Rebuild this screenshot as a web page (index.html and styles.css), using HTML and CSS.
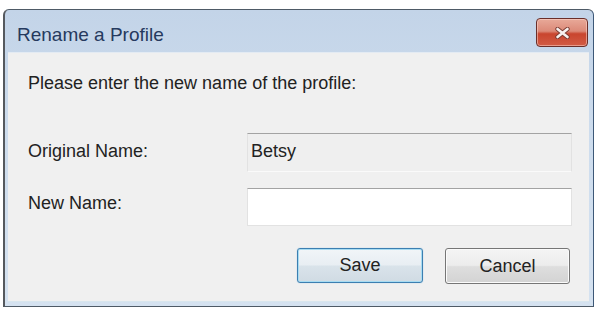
FILE: index.html
```html
<!DOCTYPE html>
<html>
<head>
<meta charset="utf-8">
<link rel="stylesheet" href="styles.css">
</head>
<body>
<div class="window">
  <div class="titlebar">
    <span class="title">Rename a Profile</span>
    <button class="close" aria-label="Close">
      <svg width="17" height="12" viewBox="0 0 17 12">
        <path d="M3.5 2 L13.5 10 M13.5 2 L3.5 10" stroke="#7a3a30" stroke-width="4.4" stroke-linecap="round"/>
        <path d="M3.5 2 L13.5 10 M13.5 2 L3.5 10" stroke="#f7f1ef" stroke-width="2.6" stroke-linecap="round"/>
      </svg>
    </button>
  </div>
  <div class="content">
    <p class="prompt">Please enter the new name of the profile:</p>
    <div class="form">
      <label class="label">Original Name:</label>
      <div class="field readonly">Betsy</div>
      <label class="label label-new">New Name:</label>
      <div class="field editable"></div>
    </div>
    <div class="buttons">
      <button class="btn default">Save</button>
      <button class="btn">Cancel</button>
    </div>
  </div>
</div>
</body>
</html>
```

FILE: styles.css
```css
html, body {
  margin: 0;
  padding: 0;
  background: #ffffff;
}

body {
  font-family: "Liberation Sans", Arial, sans-serif;
  font-size: 18px;
  color: #222222;
}

.window {
  box-sizing: border-box;
  width: 591px;
  height: 298px;
  margin: 9px 0 0 3px;
  border: 1px solid #4e5a66;
  border-left: 2px solid #55595e;
  border-right-color: #3d5877;
  border-radius: 6px 6px 0 0;
  background: linear-gradient(#c3d4e8, #cddced 40%, #d5e2f0);
  display: flex;
  flex-direction: column;
}

.titlebar {
  height: 42px;
  display: flex;
  justify-content: space-between;
  align-items: flex-start;
  padding: 0 5px 0 12px;
  flex: none;
}

.title {
  margin-top: 14px;
  font-family: "Liberation Sans", Arial, sans-serif;
  font-size: 19px;
  line-height: 21px;
  color: #263a5e;
}

.close {
  margin-top: 8px;
  width: 52px;
  height: 29px;
  padding: 0;
  border: 1px solid #6a2f2a;
  border-radius: 4px;
  background: linear-gradient(#e8a999 0%, #dc8a78 45%, #c9452e 55%, #d25c45 100%);
  box-shadow: inset 0 0 0 1px rgba(255, 220, 210, 0.5);
  display: flex;
  align-items: center;
  justify-content: center;
}

.content {
  flex: 1;
  margin: 0 4px 4px 3px;
  background: #f0f0f0;
  border-top: 1px solid #e4ebf3;
  border-bottom: 1px solid #d8e6ee;
  padding: 20px 17px 0 20px;
  display: flex;
  flex-direction: column;
}

.prompt {
  margin: 0;
  line-height: 21px;
}

.form {
  margin-top: 39px;
  display: grid;
  grid-template-columns: 219px 1fr;
  row-gap: 16px;
  align-items: center;
}

.label {
  line-height: 21px;
  position: relative;
  top: -1px;
}

.label-new {
  top: -4px;
}

.field {
  box-sizing: border-box;
  height: 39px;
  border: 1px solid #e2e2e2;
  border-top-color: #a3a3a3;
  padding: 0 0 0 3px;
  line-height: 35px;
}

.readonly {
  background: #efefef;
  border-bottom-color: #fafafa;
}

.editable {
  height: 38px;
  background: #ffffff;
}

.buttons {
  margin-top: 22px;
  margin-right: 2px;
  display: flex;
  justify-content: flex-end;
  gap: 22px;
}

.btn {
  box-sizing: border-box;
  width: 125px;
  height: 36px;
  padding: 0;
  font-family: "Liberation Sans", Arial, sans-serif;
  font-size: 18px;
  color: #222222;
  border: 1px solid #767676;
  border-radius: 3px;
  background: linear-gradient(#f4f4f4 0%, #ececec 48%, #dedede 52%, #d3d3d3 100%);
  box-shadow: inset 0 0 0 1px #fbfbfb;
}

.btn.default {
  width: 126px;
  height: 35px;
  border-color: #3c7fb1;
  background: linear-gradient(#f1f5f8 0%, #e8eef3 48%, #d9e3ea 52%, #d0dbe3 100%);
  box-shadow: inset 0 0 0 1px #a8dcf2, 0 0 1px #7ab8dd;
}
```
